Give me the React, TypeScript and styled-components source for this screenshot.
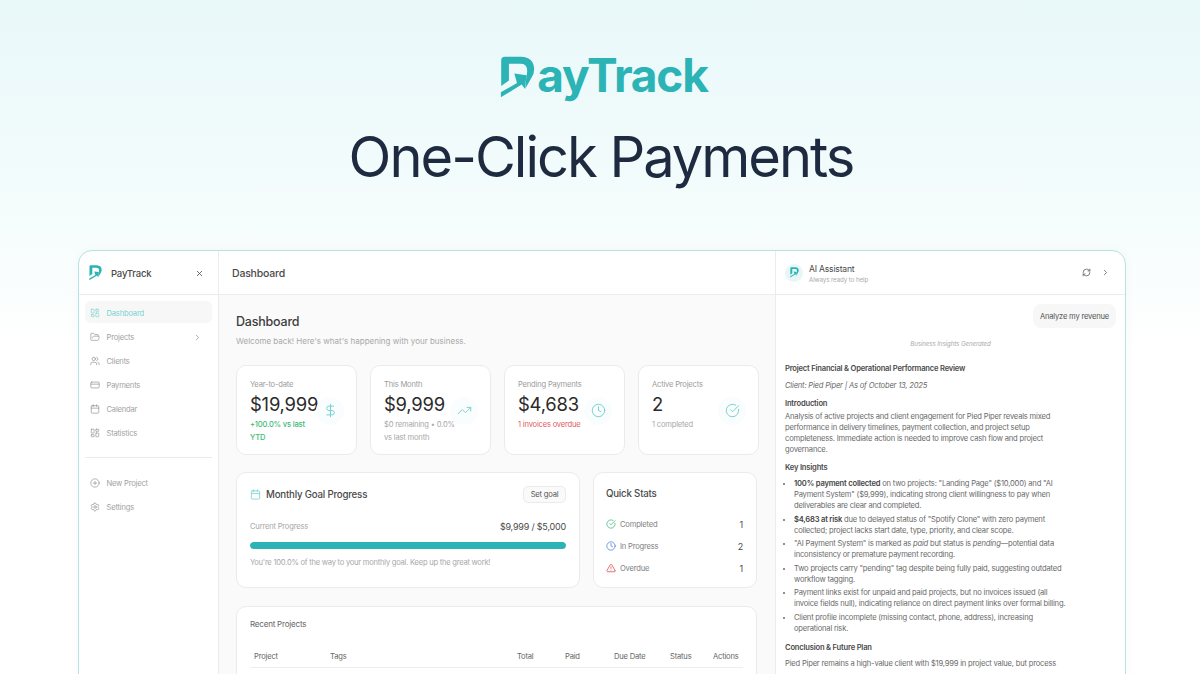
import React from 'react';
import styled, { createGlobalStyle } from 'styled-components';
import {
  Calendar,
  ChevronRight,
  CircleCheckBig,
  CirclePlus,
  Clock,
  CreditCard,
  DollarSign,
  FolderOpen,
  LayoutDashboard,
  RefreshCw,
  Settings,
  TrendingUp,
  TriangleAlert,
  Users,
  X,
} from 'lucide-react';

const TEAL = '#2cb3b5';
const TEAL_LIGHT = '#79d3d2';

const GlobalStyle = createGlobalStyle`
  html, body {
    margin: 0;
    padding: 0;
    background: #fff;
  }
  * {
    box-sizing: border-box;
  }
`;

const Page = styled.div`
  width: 1200px;
  height: 674px;
  overflow: hidden;
  display: flex;
  flex-direction: column;
  align-items: center;
  font-family: Inter, 'Liberation Sans', sans-serif;
  letter-spacing: -0.2px;
  background: linear-gradient(180deg, #e9f8f9 0%, #f4fcfc 30%, #ffffff 52%);
`;

const Brand = styled.div`
  display: flex;
  align-items: flex-start;
  height: 56px;
  margin-top: 47px;
  padding-left: 10px;
  transform: translateX(-1px);

  svg {
    margin-top: 9px;
  }
`;

const BrandName = styled.span`
  font-size: 46px;
  line-height: 56px;
  font-weight: 700;
  letter-spacing: -1.2px;
  color: ${TEAL};
  margin-left: 2px;
`;

const Headline = styled.h1`
  margin: 20px 0 0;
  padding-left: 2px;
  font-size: 56px;
  line-height: 68px;
  font-weight: 400;
  letter-spacing: -2px;
  color: #1e2a3f;
`;

const Frame = styled.div`
  flex: none;
  margin-top: 59px;
  margin-left: 4px;
  width: 1048px;
  height: 440px;
  display: flex;
  background: #fff;
  border: 1px solid #b4e3e3;
  border-radius: 14px 14px 0 0;
  box-shadow: 0 0 12px rgba(0, 0, 0, 0.03);
  overflow: hidden;
`;

const Sidebar = styled.aside`
  width: 140px;
  flex: none;
  border-right: 1px solid #ececec;
  display: flex;
  flex-direction: column;
`;

const SideHeader = styled.div`
  height: 44px;
  flex: none;
  display: flex;
  align-items: center;
  padding: 1px 14px 0 10px;
  border-bottom: 1px solid #ececec;
  color: #444;
`;

const SideBrand = styled.span`
  flex: 1;
  margin-left: 9px;
  font-size: 9.5px;
  font-weight: 500;
  color: #4a4a4a;
`;

const SideNav = styled.nav<{ $flush?: boolean }>`
  display: flex;
  flex-direction: column;
  gap: 2px;
  padding: ${({ $flush }) => ($flush ? 0 : 6)}px 6px 0;
`;

const NavItem = styled.div<{ $active?: boolean }>`
  height: 22px;
  display: flex;
  align-items: center;
  gap: 6.5px;
  padding: 2px 10px 0 5px;
  border-radius: 6px;
  font-size: 7.6px;
  color: ${({ $active }) => ($active ? TEAL_LIGHT : '#a2a2a2')};
  background: ${({ $active }) => ($active ? '#f7f7f7' : 'transparent')};

  svg {
    flex: none;
    color: ${({ $active }) => ($active ? TEAL_LIGHT : '#8f8f8f')};
  }

  span {
    flex: 1;
  }
`;

const SideDivider = styled.div`
  height: 1px;
  margin: 14px 6px 13px;
  background: #ececec;
`;

const Main = styled.main`
  width: 557px;
  flex: none;
  display: flex;
  flex-direction: column;
  background: #fafafa;
  border-right: 1px solid #ececec;
`;

const TopBar = styled.header`
  height: 44px;
  flex: none;
  display: flex;
  align-items: center;
  padding: 1px 0 0 13px;
  background: #fff;
  border-bottom: 1px solid #ececec;
  font-size: 10.5px;
  font-weight: 500;
  color: #4a4a4a;
`;

const Content = styled.div`
  padding: 18px 18px 0 17px;
  display: flex;
  flex-direction: column;
`;

const PageTitle = styled.h2`
  margin: 0;
  font-size: 12.5px;
  line-height: 18px;
  font-weight: 500;
  color: #3d3d3d;
`;

const PageSub = styled.p`
  margin: 4px 0 0;
  font-size: 8px;
  line-height: 12px;
  letter-spacing: 0;
  color: #a8a8a8;
`;

const StatRow = styled.div`
  display: grid;
  grid-template-columns: repeat(4, 121px);
  column-gap: 13px;
  margin-top: 18px;
`;

const Card = styled.section`
  background: #fff;
  border: 1px solid #ebebeb;
  border-radius: 10px;
`;

const StatCard = styled(Card)`
  height: 90px;
  padding: 13px 12px 12px 13px;
  display: flex;
  align-items: flex-start;
`;

const StatBody = styled.div`
  flex: 1;
  min-width: 0;
`;

const StatLabel = styled.div`
  font-size: 7.6px;
  line-height: 12px;
  white-space: nowrap;
  color: #9c9c9c;
`;

const StatValue = styled.div`
  margin-top: 1px;
  font-size: 18.4px;
  line-height: 24px;
  color: #2b2b2b;
`;

const StatNote = styled.div<{ $tone?: 'up' | 'down' }>`
  margin-top: 2px;
  font-size: 7.6px;
  line-height: 13px;
  white-space: pre;
  font-weight: ${({ $tone }) => ($tone === 'up' ? 500 : 400)};
  color: ${({ $tone }) =>
    $tone === 'up' ? '#3dba78' : $tone === 'down' ? '#e0605f' : '#a8a8a8'};
`;

const StatIcon = styled.div`
  flex: none;
  align-self: center;
  width: 28px;
  height: 28px;
  margin-left: -3px;
  display: flex;
  align-items: center;
  justify-content: center;
  border-radius: 50%;
  background: #fafdfd;
  color: ${TEAL_LIGHT};
`;

const MiddleRow = styled.div`
  display: grid;
  grid-template-columns: 344px 164px;
  column-gap: 13px;
  margin-top: 17px;
`;

const GoalCard = styled(Card)`
  height: 116px;
  padding: 12px 13px 0;
`;

const GoalHead = styled.div`
  display: flex;
  align-items: center;
  height: 18px;
  color: ${TEAL_LIGHT};
`;

const CardTitle = styled.h3`
  flex: 1;
  margin: 0 0 0 5px;
  font-size: 9.7px;
  font-weight: 500;
  color: #4a4a4a;
`;

const GhostButton = styled.button`
  width: 43px;
  height: 17px;
  padding: 0;
  border: 1px solid #ebebeb;
  border-radius: 5px;
  background: #fafafa;
  font-family: inherit;
  font-size: 7.6px;
  letter-spacing: -0.2px;
  color: #555;
`;

const ProgressHead = styled.div`
  display: flex;
  justify-content: space-between;
  align-items: center;
  margin-top: 16px;
  height: 14px;
  font-size: 7.6px;
  color: #a8a8a8;

  strong {
    font-size: 9px;
    font-weight: 400;
    color: #4a4a4a;
  }
`;

const ProgressTrack = styled.div`
  height: 7px;
  margin-top: 9px;
  border-radius: 4px;
  overflow: hidden;
  background: #eee;
`;

const ProgressFill = styled.div`
  height: 100%;
  background: ${TEAL};
  border-radius: 4px;
`;

const ProgressNote = styled.p`
  margin: 8px 0 0;
  font-size: 7.6px;
  line-height: 12px;
  letter-spacing: -0.25px;
  color: #a8a8a8;
`;

const StatsCard = styled(Card)`
  height: 116px;
  padding: 13px 13px 0 12px;
`;

const StatsTitle = styled.h3`
  margin: 0 0 11px;
  font-size: 9.7px;
  line-height: 16px;
  font-weight: 500;
  color: #4a4a4a;
`;

const StatsLine = styled.div<{ $color: string }>`
  display: flex;
  align-items: center;
  height: 22px;
  font-size: 7.6px;
  color: #808080;

  svg {
    flex: none;
    color: ${({ $color }) => $color};
    margin-right: 4px;
  }

  span {
    flex: 1;
  }

  b {
    font-size: 9px;
    font-weight: 400;
    color: #4a4a4a;
  }
`;

const ProjectsCard = styled(Card)`
  margin-top: 18px;
  height: 120px;
  padding: 10px 13px 0;
`;

const ProjectsTitle = styled.h3`
  margin: 0;
  font-size: 8px;
  line-height: 14px;
  font-weight: 400;
  color: #666;
`;

const TableHead = styled.div`
  display: grid;
  grid-template-columns: 76px 187px 48px 49px 56px 43px 1fr;
  align-items: center;
  height: 24px;
  margin-top: 13px;
  padding: 1px 0 0 4px;
  border-bottom: 1px solid #eee;
  font-size: 7.6px;
  color: #666;
`;

const Assistant = styled.aside`
  flex: 1;
  min-width: 0;
  display: flex;
  flex-direction: column;
`;

const AssistantHeader = styled.header`
  height: 44px;
  flex: none;
  display: flex;
  align-items: center;
  padding: 0 15px 0 9px;
  border-bottom: 1px solid #ececec;
  color: #555;
`;

const Avatar = styled.div`
  width: 18px;
  height: 18px;
  flex: none;
  display: flex;
  align-items: center;
  justify-content: center;
  border-radius: 50%;
  background: #e8f7f6;
`;

const AssistantTitle = styled.div`
  flex: 1;
  margin-left: 6px;
  padding-top: 4px;
  font-size: 8.6px;
  line-height: 11px;
  color: #4a4a4a;

  small {
    display: block;
    font-size: 6.2px;
    line-height: 10px;
    letter-spacing: -0.1px;
    color: #ababab;
  }
`;

const HeaderActions = styled.div`
  display: flex;
  align-items: center;
  gap: 10px;
`;

const Chat = styled.div`
  padding: 9px 9px 0;
  display: flex;
  flex-direction: column;
`;

const Bubble = styled.div`
  align-self: flex-end;
  height: 24px;
  padding: 0 7px;
  display: flex;
  align-items: center;
  border-radius: 8px;
  background: #f7f7f7;
  font-size: 7.6px;
  color: #555;
`;

const Generated = styled.div`
  margin-top: 11px;
  text-align: center;
  font-size: 6.2px;
  line-height: 10px;
  font-style: italic;
  letter-spacing: -0.1px;
  color: #ababab;
`;

const DocTitle = styled.h4<{ $top: number }>`
  margin: ${({ $top }) => $top}px 0 0;
  font-size: 7.6px;
  line-height: 11px;
  font-weight: 600;
  color: #4a4a4a;
`;

const DocText = styled.p<{ $top?: number; $italic?: boolean }>`
  margin: ${({ $top }) => $top ?? 0}px 0 0;
  font-size: 7.6px;
  line-height: 11px;
  font-style: ${({ $italic }) => ($italic ? 'italic' : 'normal')};
  color: #6a6a6a;
`;

const DocList = styled.ul`
  margin: 5px 0 0;
  padding: 0 0 0 9px;
  list-style: disc;
  font-size: 7.6px;
  line-height: 11px;
  color: #6a6a6a;

  li + li {
    margin-top: 2.5px;
  }

  strong {
    font-weight: 600;
    color: #444;
  }
`;

type LogoProps = { size: number };

const LogoMark = ({ size }: LogoProps) => (
  <svg width={size} height={size * 1.2} viewBox="30 33 103 125" fill={TEAL}>
    <path d="M33 46 Q33 35 44 35 H92 Q131 37 131 73 Q131 86 123 98 L105 130 L108 92 Q111 84 110 73 Q109 56 90 56 H56 V106 L33 122 Z" />
    <path d="M32 141 L80 113 L72 85 L108 90 L104 131 L94 118 L32 156 Z" />
  </svg>
);

const navItems = [
  { label: 'Dashboard', icon: LayoutDashboard, active: true },
  { label: 'Projects', icon: FolderOpen, chevron: true },
  { label: 'Clients', icon: Users },
  { label: 'Payments', icon: CreditCard },
  { label: 'Calendar', icon: Calendar },
  { label: 'Statistics', icon: LayoutDashboard },
];

const footerItems = [
  { label: 'New Project', icon: CirclePlus },
  { label: 'Settings', icon: Settings },
];

const stats = [
  { label: 'Year-to-date', value: '$19,999', note: '+100.0% vs last\nYTD', tone: 'up', icon: DollarSign },
  { label: 'This Month', value: '$9,999', note: '$0 remaining • 0.0%\nvs last month', icon: TrendingUp },
  { label: 'Pending Payments', value: '$4,683', note: '1 invoices overdue', tone: 'down', icon: Clock },
  { label: 'Active Projects', value: '2', note: '1 completed', icon: CircleCheckBig },
] as const;

const quickStats = [
  { label: 'Completed', value: 1, color: '#3dba78', icon: CircleCheckBig },
  { label: 'In Progress', value: 2, color: '#4a7fd6', icon: Clock },
  { label: 'Overdue', value: 1, color: '#d9484a', icon: TriangleAlert },
];

const columns = ['Project', 'Tags', 'Total', 'Paid', 'Due Date', 'Status', 'Actions'];

export default function App() {
  return (
    <Page>
      <GlobalStyle />
      <Brand>
        <LogoMark size={35} />
        <BrandName>ayTrack</BrandName>
      </Brand>
      <Headline>One-Click Payments</Headline>

      <Frame>
        <Sidebar>
          <SideHeader>
            <LogoMark size={13} />
            <SideBrand>PayTrack</SideBrand>
            <X size={9} />
          </SideHeader>
          <SideNav>
            {navItems.map(({ label, icon: Icon, active, chevron }) => (
              <NavItem key={label} $active={active}>
                <Icon size={10} strokeWidth={1.6} />
                <span>{label}</span>
                {chevron && <ChevronRight size={9} />}
              </NavItem>
            ))}
          </SideNav>
          <SideDivider />
          <SideNav $flush>
            {footerItems.map(({ label, icon: Icon }) => (
              <NavItem key={label}>
                <Icon size={10} strokeWidth={1.6} />
                <span>{label}</span>
              </NavItem>
            ))}
          </SideNav>
        </Sidebar>

        <Main>
          <TopBar>Dashboard</TopBar>
          <Content>
            <PageTitle>Dashboard</PageTitle>
            <PageSub>Welcome back! Here's what's happening with your business.</PageSub>

            <StatRow>
              {stats.map((stat) => {
                const Icon = stat.icon;
                return (
                  <StatCard key={stat.label}>
                    <StatBody>
                      <StatLabel>{stat.label}</StatLabel>
                      <StatValue>{stat.value}</StatValue>
                      <StatNote $tone={'tone' in stat ? stat.tone : undefined}>{stat.note}</StatNote>
                    </StatBody>
                    <StatIcon>
                      <Icon size={15} strokeWidth={1.6} />
                    </StatIcon>
                  </StatCard>
                );
              })}
            </StatRow>

            <MiddleRow>
              <GoalCard>
                <GoalHead>
                  <Calendar size={11} strokeWidth={1.8} />
                  <CardTitle>Monthly Goal Progress</CardTitle>
                  <GhostButton>Set goal</GhostButton>
                </GoalHead>
                <ProgressHead>
                  <span>Current Progress</span>
                  <strong>$9,999 / $5,000</strong>
                </ProgressHead>
                <ProgressTrack>
                  <ProgressFill />
                </ProgressTrack>
                <ProgressNote>You're 100.0% of the way to your monthly goal. Keep up the great work!</ProgressNote>
              </GoalCard>

              <StatsCard>
                <StatsTitle>Quick Stats</StatsTitle>
                {quickStats.map(({ label, value, color, icon: Icon }) => (
                  <StatsLine key={label} $color={color}>
                    <Icon size={10} strokeWidth={1.8} />
                    <span>{label}</span>
                    <b>{value}</b>
                  </StatsLine>
                ))}
              </StatsCard>
            </MiddleRow>

            <ProjectsCard>
              <ProjectsTitle>Recent Projects</ProjectsTitle>
              <TableHead>
                {columns.map((column) => (
                  <span key={column}>{column}</span>
                ))}
              </TableHead>
            </ProjectsCard>
          </Content>
        </Main>

        <Assistant>
          <AssistantHeader>
            <Avatar>
              <LogoMark size={9} />
            </Avatar>
            <AssistantTitle>
              AI Assistant
              <small>Always ready to help</small>
            </AssistantTitle>
            <HeaderActions>
              <RefreshCw size={9} />
              <ChevronRight size={9} />
            </HeaderActions>
          </AssistantHeader>
          <Chat>
            <Bubble>Analyze my revenue</Bubble>
            <Generated>Business Insights Generated</Generated>
            <DocTitle $top={14}>Project Financial &amp; Operational Performance Review</DocTitle>
            <DocText $top={6} $italic>
              Client: Pied Piper | As of October 13, 2025
            </DocText>
            <DocTitle $top={7}>Introduction</DocTitle>
            <DocText $top={2}>
              Analysis of active projects and client engagement for Pied Piper reveals mixed
              <br />
              performance in delivery timelines, payment collection, and project setup
              <br />
              completeness. Immediate action is needed to improve cash flow and project
              <br />
              governance.
            </DocText>
            <DocTitle $top={7}>Key Insights</DocTitle>
            <DocList>
              <li>
                <strong>100% payment collected</strong> on two projects: "Landing Page" ($10,000) and "AI
                <br />
                Payment System" ($9,999), indicating strong client willingness to pay when
                <br />
                deliverables are clear and completed.
              </li>
              <li>
                <strong>$4,683 at risk</strong> due to delayed status of "Spotify Clone" with zero payment
                <br />
                collected; project lacks start date, type, priority, and clear scope.
              </li>
              <li>
                "AI Payment System" is marked as <em>paid</em> but status is <em>pending</em>—potential data
                <br />
                inconsistency or premature payment recording.
              </li>
              <li>
                Two projects carry "pending" tag despite being fully paid, suggesting outdated
                <br />
                workflow tagging.
              </li>
              <li>
                Payment links exist for unpaid and paid projects, but no invoices issued (all
                <br />
                invoice fields null), indicating reliance on direct payment links over formal billing.
              </li>
              <li>
                Client profile incomplete (missing contact, phone, address), increasing
                <br />
                operational risk.
              </li>
            </DocList>
            <DocTitle $top={8.5}>Conclusion &amp; Future Plan</DocTitle>
            <DocText $top={5}>Pied Piper remains a high-value client with $19,999 in project value, but process</DocText>
          </Chat>
        </Assistant>
      </Frame>
    </Page>
  );
}
